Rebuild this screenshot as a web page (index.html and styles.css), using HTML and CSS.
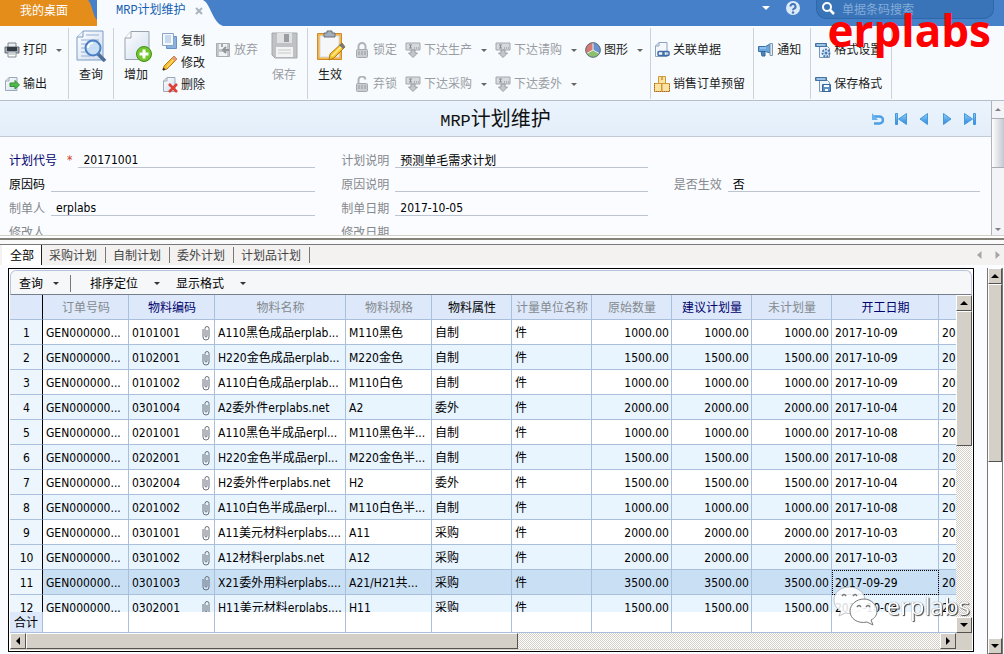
FILE: index.html
```html
<!DOCTYPE html>
<html lang="zh-CN">

<head>
  <meta charset="UTF-8" />
  <meta name="viewport" content="width=device-width, initial-scale=1.0" />
  <title>MRP计划维护</title>
  <link rel="stylesheet" href="styles.css">
</head>

<body>
  <!-- shared icons -->
  <svg class="defs" aria-hidden="true">
    <defs>
      <linearGradient id="paper" x1="0" y1="0" x2="1" y2="1">
        <stop offset="0" stop-color="#fff" />
        <stop offset="1" stop-color="#cfdcec" />
      </linearGradient>
      <linearGradient id="nav" x1="0" y1="0" x2="0" y2="1">
        <stop offset="0" stop-color="#8fd0f8" />
        <stop offset="1" stop-color="#2f86dd" />
      </linearGradient>
    </defs>
    <symbol id="clip" viewBox="0 0 8 16">
      <path d="M1 4v8a3 3 0 0 0 6 0V3.500a2 2 0 0 0-4 0V11a1 1 0 0 0 2 0V5" fill="none" stroke="#68717c" />
    </symbol>
    <symbol id="send" viewBox="0 0 16 16">
      <path d="M1 1h14v7H1z" fill="#d7dadd" stroke="#a3a8ad" />
      <path d="M4 3h3M5.500 3v3M4 6h3M9 6h1M11 6h1M13 6h1" stroke="#858b91" fill="none" />
      <path d="M6 8h4v3h2.500L8 15.500 3.500 11H6z" fill="#c3c7cb" stroke="#9aa0a6" />
    </symbol>
    <symbol id="lock" viewBox="0 0 16 16">
      <path d="M4.500 8V4.500a3.500 3.500 0 0 1 7 0V8" fill="none" stroke="#aeb3b8" stroke-width="2" />
      <rect x="2.500" y="7.500" width="11" height="8" rx="1" fill="#c9cdd1" stroke="#a5aaaf" />
      <path d="M4 10h8M4 12h8" stroke="#959ba1" stroke-dasharray="2 1" />
    </symbol>
    <symbol id="unlock" viewBox="0 0 16 16">
      <path d="M4.500 8V4.500a3.500 3.500 0 0 1 7-1" fill="none" stroke="#aeb3b8" stroke-width="2" />
      <rect x="2.500" y="7.500" width="11" height="8" rx="1" fill="#c9cdd1" stroke="#a5aaaf" />
      <path d="M4 10h8M4 12h8" stroke="#959ba1" stroke-dasharray="2 1" />
    </symbol>
    <symbol id="format" viewBox="0 0 16 16">
      <path d="M4.500 4.500h8l2 2v9h-10z" fill="#edf4fb" stroke="#7996b6" />
      <path d="M0.500 1.500h11v3h-11z" fill="#6b9fd2" stroke="#44719f" />
      <path d="M2 3h8" stroke="#d4e7f8" />
    </symbol>
  </svg>

  <div class="app">
    <header class="titlebar">
      <button class="tab tab-home">我的桌面</button>
      <svg class="home-edge" viewBox="0 0 9 26"><path d="M0 0C4 4 5 16 9 20V26H0z" fill="#e48d1b" /></svg>
      <div class="tab tab-active">
        <span>MRP计划维护</span>
        <button class="tab-close" aria-label="关闭"><svg viewBox="0 0 8 8"><path d="M1 1l6 6M7 1L1 7" stroke="#a9b4c0" stroke-width="2" /></svg></button>
      </div>
      <svg class="active-edge" viewBox="0 0 20 26"><path d="M0 0C8 4 9 22 20 26H0z" fill="#f7fbff" /></svg>
      <div class="titlebar-tools">
        <button class="plain" aria-label="菜单"><i class="caret caret-white"></i></button>
        <button class="plain" aria-label="帮助"><svg class="icon" viewBox="0 0 16 16"><circle cx="8" cy="8" r="7" fill="#dce9f8" /><path d="M5.500 6.500a2.500 2.500 0 1 1 3.600 2.200Q8 9.200 8 10.300" fill="none" stroke="#4076b5" stroke-width="2" /><circle cx="8" cy="12.500" r="1.200" fill="#4076b5" /></svg></button>
        <label class="search">
          <svg viewBox="0 0 14 14"><circle cx="6" cy="6" r="4" fill="none" stroke="#fff" stroke-width="2" /><path d="M9 9l4 4" stroke="#fff" stroke-width="2.500" /></svg>
          <input type="text" placeholder="单据条码搜索" aria-label="单据条码搜索">
        </label>
      </div>
    </header>

    <nav class="ribbon">
      <div class="group group-print">
        <div class="stack">
          <button class="tool">
            <svg class="icon" viewBox="0 0 16 16"><path d="M4 1h8v5H4z" fill="#e9edf2" stroke="#7c858f" /><path d="M1 5h14v6H1z" fill="#a7adb5" stroke="#656c75" /><path d="M3 5h10v4H3z" fill="#353b43" /><path d="M4 10h8v5H4z" fill="#fff" stroke="#858d96" /><path d="M5 12h6" stroke="#9aa" /></svg>
            打印<i class="caret"></i></button>
          <button class="tool">
            <svg class="icon" viewBox="0 0 16 16"><path d="M5 1.500h8v13H1.500V5z" fill="url(#paper)" stroke="#9ba9b9" /><path d="M5 1.500V5H1.500" fill="none" stroke="#9ba9b9" /><path d="M6 7h5V4.500L15.500 9 11 13v-2.500H6z" fill="#4fb848" stroke="#34923a" /></svg>
            输出</button>
        </div>
      </div>

      <div class="group group-query">
        <button class="big-tool">
          <svg viewBox="0 0 32 32"><path d="M8 1h20v29H2V7z" fill="url(#paper)" stroke="#7b9dc5" /><path d="M8 1v6H2" fill="#eaf2fb" stroke="#7b9dc5" /><path d="M11 5h13M6 10h18M6 14h18M6 18h18M6 22h10M6 26h10" stroke="#8fb0da" /><path d="M23 24l7 7" stroke="#4f6e98" stroke-width="3.500" /><circle cx="18" cy="18" r="7.500" fill="#c5e0f7" fill-opacity=".9" stroke="#4d7fc5" stroke-width="2" /><path d="M13 18a5 5 0 0 1 5-5" stroke="#fff" stroke-width="2" fill="none" /></svg>
          查询</button>
      </div>

      <div class="group group-edit">
        <button class="big-tool">
          <svg viewBox="0 0 32 32"><path d="M11 1.500h18v28H5V8z" fill="url(#paper)" stroke="#98a3ae" /><path d="M11 1.500V8H5" fill="#fff" stroke="#98a3ae" /><circle cx="24" cy="24" r="7.500" fill="#72c62b" stroke="#438e1b" /><path d="M24 19.500v9M19.500 24h9" stroke="#fff" stroke-width="3" /></svg>
          增加</button>
        <div class="stack stack-three">
          <button class="tool">
            <svg class="icon" viewBox="0 0 16 16"><path d="M4.500 3.500h10v12h-10z" fill="#8ab2df" stroke="#6691c2" /><path d="M.5.5h11v12H.5z" fill="#f3f8fd" stroke="#89a4c3" /><path d="M3 3h6M3 5h6M3 7h6M3 9h6" stroke="#9bb9dc" /></svg>
            复制</button>
          <button class="tool">
            <svg class="icon" viewBox="0 0 16 16"><path d="M12 1l3 3L5 14l-4 1 1-4z" fill="#f7bd2c" stroke="#b57a1b" /><path d="M12 1l3 3-2 2-3-3z" fill="#e7948a" /><path d="M5 12l6-7" stroke="#ffe795" /><path d="M1 15l2-.5L1.500 13z" fill="#333" stroke="#333" /></svg>
            修改</button>
          <button class="tool">
            <svg class="icon" viewBox="0 0 16 16"><path d="M5 .5h8v14H1.500V4z" fill="url(#paper)" stroke="#9ba9b9" /><path d="M5 .5V4H1.500" fill="none" stroke="#9ba9b9" /><path d="M7 7l8 8M15 7l-8 8" stroke="#df3f35" stroke-width="2.500" /></svg>
            删除</button>
        </div>
        <div class="stack">
          <button class="tool" disabled>
            <svg class="icon" viewBox="0 0 16 16"><path d="M1.500 1.500h13v13h-13z" fill="#c4c7ca" stroke="#a9adb1" /><path d="M4 2h8v5H4zM4 10h8v4H4z" fill="#f0f1f2" /><path d="M6 2h2v3H6z" fill="#a5a9ad" /><path d="M14 8H8m3-3L8 8l3 3" stroke="#909599" stroke-width="2" fill="none" /></svg>
            放弃</button>
        </div>
        <button class="big-tool" disabled>
          <svg viewBox="0 0 32 32"><path d="M4 3h25v25H7l-3-3z" fill="#bfc1c4" stroke="#a5a8ab" /><path d="M9 3h15v10H9z" fill="#dfe1e3" /><path d="M16 4h5v8h-5z" fill="#999da1" /><path d="M8 17h17v10H8z" fill="#f3f3f4" /><path d="M10 20h13M10 23h13" stroke="#c6c8ca" /></svg>
          保存</button>
      </div>

      <div class="group group-flow">
        <button class="big-tool">
          <svg viewBox="0 0 32 32"><path d="M3.500 3.500h24v26h-24z" fill="#f3b64e" stroke="#d08a26" /><path d="M6 6h19v21H6z" fill="#f6f7f8" stroke="#d5d9dc" /><path d="M10 3h3V1h5v2h3v4H10z" fill="#a5afb9" stroke="#66727d" /><path d="M28 13l3 4-11 11-5 2 1-6z" fill="#f7c632" stroke="#af791b" /><path d="M28 13l3 4-2 2-4-4z" fill="#777" /><path d="M18 26l9-9" stroke="#fff099" stroke-width="1.500" /></svg>
          生效</button>
        <div class="stack">
          <button class="tool" disabled><svg class="icon"><use href="#lock" /></svg>锁定</button>
          <button class="tool" disabled><svg class="icon"><use href="#unlock" /></svg>弃锁</button>
        </div>
        <div class="stack">
          <button class="tool" disabled><svg class="icon"><use href="#send" /></svg>下达生产<i class="caret"></i></button>
          <button class="tool" disabled><svg class="icon"><use href="#send" /></svg>下达采购<i class="caret"></i></button>
        </div>
        <div class="stack">
          <button class="tool" disabled><svg class="icon"><use href="#send" /></svg>下达请购<i class="caret"></i></button>
          <button class="tool" disabled><svg class="icon"><use href="#send" /></svg>下达委外<i class="caret"></i></button>
        </div>
        <div class="stack">
          <button class="tool">
            <svg class="icon" viewBox="0 0 16 16"><circle cx="8" cy="8" r="7.500" fill="#8cc06d" /><path d="M8 8V.5A7.500 7.500 0 0 0 1.500 11.700z" fill="#d67972" /><path d="M8 8V.5a7.500 7.500 0 0 1 6.500 11.200z" fill="#6991cd" /><path d="M8 .5V8l6.500 3.700M8 8l-6.500 3.700" stroke="#e9f0f5" fill="none" /><circle cx="8" cy="8" r="7.300" fill="none" stroke="#5d7187" /></svg>
            图形<i class="caret"></i></button>
        </div>
      </div>

      <div class="group group-link">
        <div class="stack">
          <button class="tool">
            <svg class="icon" viewBox="0 0 16 16"><path d="M5 .5h8v14H1.500V4z" fill="#f4f8fc" stroke="#8da4bf" /><path d="M5 .5V4H1.500" fill="none" stroke="#8da4bf" /><rect x="4" y="9.500" width="6" height="4" rx="1" fill="none" stroke="#3e6ca8" stroke-width="1.500" /><rect x="9" y="9.500" width="6" height="4" rx="1" fill="none" stroke="#3e6ca8" stroke-width="1.500" /></svg>
            关联单据</button>
          <button class="tool">
            <svg class="icon" viewBox="0 0 16 16"><path d="M4.500.500h7v7h-7zM.5 7.500h7v8h-7zM8 7.500h7.500v8H8z" fill="#fbe3a1" stroke="#cf993e" /><path d="M7 1h2v3H7z" fill="#d9a54c" /><path d="M.5 7v8.500h15V7" fill="none" stroke="#aa6526" stroke-dasharray="1 1" /></svg>
            销售订单预留</button>
        </div>
      </div>

      <div class="group group-notice">
        <div class="stack">
          <button class="tool">
            <svg class="icon" viewBox="0 0 16 16"><path d="M.5 4.500h7L12 2v9L7.500 9.500h-7z" fill="#6ba6dd" stroke="#3972aa" /><path d="M3 9.500h4V14H4z" fill="#4e86bd" stroke="#356795" /><path d="M12 1.500h2.500v12H12z" fill="#dce9f4" stroke="#8499ae" /><path d="M2 6h6" stroke="#b8dcf9" /></svg>
            通知</button>
        </div>
      </div>

      <div class="group group-format">
        <div class="stack">
          <button class="tool">
            <svg class="icon" viewBox="0 0 16 16"><use href="#format" /><circle cx="11" cy="11" r="3.500" fill="#e0edf8" stroke="#4a7bb4" stroke-width="2" stroke-dasharray="2 1" /><circle cx="11" cy="11" r="1.500" fill="#4a7bb4" /></svg>
            格式设置</button>
          <button class="tool">
            <svg class="icon" viewBox="0 0 16 16"><use href="#format" /><path d="M7.500 8.500h8v7h-8z" fill="#5c8fc8" stroke="#35669e" /><path d="M9 9h5v2H9zM10 13h3v2h-3z" fill="#fff" /></svg>
            保存格式</button>
        </div>
      </div>
    </nav>

    <section class="bill">
      <div class="bill-main">
        <div class="bill-head">
          <h1><span class="latin">MRP</span>计划维护</h1>
          <div class="pager">
            <button class="plain" aria-label="刷新"><svg viewBox="0 0 12 12"><path d="M1 3.500h6.500a3.500 3.500 0 0 1 0 7H2" fill="none" stroke="#4a9fe6" stroke-width="2.500" /><path d="M0 0v7h6z" fill="#68b3ee" /></svg></button>
            <button class="plain" aria-label="首张"><svg viewBox="0 0 12 12"><path d="M.5.5h2v11h-2zM11.500.500v11L3.500 6z" fill="url(#nav)" stroke="#4598dc" /></svg></button>
            <button class="plain" aria-label="上张"><svg viewBox="0 0 12 12"><path d="M9.500.500v11L2 6z" fill="url(#nav)" stroke="#4598dc" /></svg></button>
            <button class="plain" aria-label="下张"><svg viewBox="0 0 12 12"><path d="M2.500.500v11L10 6z" fill="url(#nav)" stroke="#4598dc" /></svg></button>
            <button class="plain" aria-label="末张"><svg viewBox="0 0 12 12"><path d="M9.500.500h2v11h-2zM.5.5v11L8.500 6z" fill="url(#nav)" stroke="#4598dc" /></svg></button>
          </div>
        </div>
        <form class="fields">
          <div class="field key"><label for="code">计划代号</label><b class="star">*</b><input id="code" value="20171001"></div>
          <div class="field"><label for="memo">计划说明</label><input id="memo" value="预测单毛需求计划"></div>
          <div></div>
          <div class="field dark"><label for="reason">原因码</label><input id="reason"></div>
          <div class="field"><label for="reason-memo">原因说明</label><input id="reason-memo"></div>
          <div class="field"><label for="valid">是否生效</label><input id="valid" value="否"></div>
          <div class="field"><label for="maker">制单人</label><input id="maker" value="erplabs"></div>
          <div class="field"><label for="made">制单日期</label><input id="made" value="2017-10-05"></div>
          <div></div>
          <div class="field"><label for="editor">修改人</label><input id="editor"></div>
          <div class="field"><label for="edited">修改日期</label><input id="edited"></div>
        </form>
      </div>
      <div class="slim-scroll">
        <button aria-label="向上"><i class="caret caret-up"></i></button>
        <div class="slim-thumb"></div>
        <button class="slim-down" aria-label="向下"><i class="caret"></i></button>
      </div>
    </section>

    <div class="splitter"></div>

    <div class="sheets">
      <button class="sheet current">全部</button>
      <button class="sheet">采购计划</button>
      <button class="sheet">自制计划</button>
      <button class="sheet">委外计划</button>
      <button class="sheet">计划品计划</button>
      <div class="sheet-arrows">
        <button class="plain" aria-label="左移"><svg viewBox="0 0 5 8"><path d="M4.500 0v8L0 4z" fill="#a5a5a5" /></svg></button>
        <button class="plain" aria-label="右移"><svg viewBox="0 0 5 8"><path d="M.5 0v8L5 4z" fill="#a5a5a5" /></svg></button>
      </div>
    </div>

    <main class="detail">
      <div class="grid-box">
        <div class="grid-bar">
          <button class="bar-button">查询<i class="caret"></i></button>
          <button class="bar-button wide">排序定位<i class="caret"></i></button>
          <button class="bar-button wide">显示格式<i class="caret"></i></button>
        </div>
        <div class="grid-body">
          <div class="grid-view">
            <table>
              <colgroup>
                <col class="w-no"><col class="w-code"><col class="w-code"><col class="w-name"><col class="w-code">
                <col class="w-num"><col class="w-num"><col class="w-num"><col class="w-num"><col class="w-num">
                <col class="w-date"><col class="w-date">
              </colgroup>
              <thead>
                <tr>
                  <th></th>
                  <th>订单号码</th>
                  <th class="key">物料编码</th>
                  <th>物料名称</th>
                  <th>物料规格</th>
                  <th class="dark">物料属性</th>
                  <th>计量单位名称</th>
                  <th>原始数量</th>
                  <th class="key">建议计划量</th>
                  <th>未计划量</th>
                  <th class="key">开工日期</th>
                  <th></th>
                </tr>
              </thead>
              <tbody class="rows-js"></tbody>
              <tfoot>
                <tr>
                  <th>合计</th>
                  <td></td><td></td><td></td><td></td><td></td><td></td><td></td><td></td><td></td><td></td><td></td>
                </tr>
              </tfoot>
            </table>
          </div>
          <div class="scroll scroll-v">
            <button aria-label="向上"><i class="caret caret-up"></i></button>
            <div class="thumb"></div>
            <button class="last" aria-label="向下"><i class="caret"></i></button>
          </div>
        </div>
        <div class="grid-foot">
          <div class="scroll scroll-h">
            <button aria-label="向左"><i class="caret caret-left"></i></button>
            <div class="thumb"></div>
            <button class="last" aria-label="向右"><i class="caret caret-right"></i></button>
          </div>
        </div>
      </div>
      <div class="scroll scroll-v scroll-page">
        <button aria-label="向上"><i class="caret caret-up"></i></button>
        <div class="thumb"></div>
        <button class="last" aria-label="向下"><i class="caret"></i></button>
      </div>
    </main>

    <div class="brand">erplabs</div>
    <div class="watermark">
      <svg viewBox="0 0 46 40">
        <path d="M16 1C7 1 1 7 1 14c0 5 3 9 7 11l-2 5 6-3c9 2 20-3 20-13C32 7 25 1 16 1z" fill="#fff" fill-opacity=".85" stroke="#aaa" stroke-width=".7" />
        <path d="M31 13c-8 0-14 6-14 12 0 8 8 13 17 11l6 3-2-5c4-2 6-5 6-9 0-6-6-12-13-12z" fill="#fff" fill-opacity=".9" stroke="#777" />
        <path d="M9 10q2-3 4 0M20 10q2-3 4 0M24 21q2-3 4 0M33 21q2-3 4 0" fill="none" stroke="#777" stroke-width="1.500" />
      </svg>
      <span>erplabs</span>
    </div>
  </div>

  <script>
    // code, name, spec, type, quantity, start date
    const rows = [
      ['0101001', 'A110黑色成品erplab...', 'M110黑色', '自制', '1000.00', '2017-10-09'],
      ['0102001', 'H220金色成品erplab...', 'M220金色', '自制', '1500.00', '2017-10-09'],
      ['0101002', 'A110白色成品erplab...', 'M110白色', '自制', '1000.00', '2017-10-09'],
      ['0301004', 'A2委外件erplabs.net', 'A2', '委外', '2000.00', '2017-10-04'],
      ['0201001', 'A110黑色半成品erpl...', 'M110黑色半...', '自制', '1000.00', '2017-10-08'],
      ['0202001', 'H220金色半成品erpl...', 'M220金色半...', '自制', '1500.00', '2017-10-08'],
      ['0302004', 'H2委外件erplabs.net', 'H2', '委外', '1500.00', '2017-10-04'],
      ['0201002', 'A110白色半成品erpl...', 'M110白色半...', '自制', '1000.00', '2017-10-08'],
      ['0301001', 'A11美元材料erplabs....', 'A11', '采购', '2000.00', '2017-10-03'],
      ['0301002', 'A12材料erplabs.net', 'A12', '采购', '2000.00', '2017-10-03'],
      ['0301003', 'X21委外用料erplabs....', 'A21/H21共...', '采购', '3500.00', '2017-09-29'],
      ['0302001', 'H11美元材料erplabs....', 'H11', '采购', '1500.00', '2017-10-03'],
    ];
    const selected = 10;

    document.querySelector('.rows-js').innerHTML = rows.map(([code, name, spec, type, qty, date], i) => `
      <tr class="${i === selected ? 'selected' : ''}">
        <th>${i + 1}</th>
        <td>GEN000000...</td>
        <td><div class="code">${code}<svg><use href="#clip" /></svg></div></td>
        <td>${name}</td>
        <td>${spec}</td>
        <td>${type}</td>
        <td>件</td>
        <td class="num">${qty}</td>
        <td class="num">${qty}</td>
        <td class="num">${qty}</td>
        <td class="date">${date}</td>
        <td>${date}</td>
      </tr>`).join('');
  </script>
</body>

</html>
```
FILE: styles.css
```css
* {
  box-sizing: border-box;
}

body {
  margin: 0;
  background-color: #fafcff;
}

body,
button,
input {
  font-family: "DejaVu Sans Condensed", "Noto Sans", "Noto Sans CJK SC", sans-serif;
  font-size: 12px;
  line-height: 16px;
}

button {
  margin: 0;
  padding: 0;
  border: none;
  background: none;
  color: inherit;
  white-space: nowrap;
}

svg {
  display: block;
  flex: none;
}

.defs {
  position: absolute;
  width: 0;
  height: 0;
}

.app {
  position: relative;
  height: 100vh;
  display: flex;
  flex-direction: column;
  overflow: hidden;
}

.icon {
  width: 16px;
  height: 16px;
}

.caret {
  flex: none;
  border: 3px solid transparent;
  border-top-color: #333;
  border-bottom: none;
}

.caret-up {
  border: 3px solid transparent;
  border-bottom-color: #333;
  border-top: none;
}

.caret-left {
  border: 4px solid transparent;
  border-right-color: #000;
  border-left: none;
}

.caret-right {
  border: 4px solid transparent;
  border-left-color: #000;
  border-right: none;
}

.caret-white {
  border-width: 4px;
  border-bottom: none;
  border-top-color: #fff;
}

/* Title bar */
.titlebar {
  flex: none;
  display: flex;
  height: 26px;
  background-color: #4580c8;
}

.tab {
  display: flex;
  align-items: center;
  padding-bottom: 5px;
}

.tab-home {
  width: 88px;
  justify-content: center;
  background-color: #e48d1b;
  color: #fff;
}

.home-edge {
  width: 9px;
  height: 26px;
}

.tab-active {
  gap: 9px;
  padding-left: 19px;
  background-color: #f7fbff;
  color: #1560b0;
  font-family: "Liberation Mono", "Noto Sans CJK SC", monospace;
}

.tab-close svg {
  width: 8px;
  height: 8px;
}

.active-edge {
  width: 20px;
  height: 26px;
}

.titlebar-tools {
  display: flex;
  align-items: flex-start;
  gap: 15px;
  margin-left: auto;
  padding-right: 10px;
}

.titlebar-tools .plain {
  display: flex;
  align-items: center;
  height: 16px;
}

.search {
  display: flex;
  gap: 7px;
  width: 178px;
  height: 19px;
  padding: 1px 8px 0 4px;
  border: 1px solid #2e68ab;
  border-top: none;
  border-radius: 0 0 10px 10px;
  background-color: #3a74b8;
}

.search svg {
  width: 14px;
  height: 14px;
}

.search input {
  flex: 1;
  min-width: 0;
  padding: 0;
  border: none;
  outline: none;
  background: none;
  color: #fff;
}

.search input::placeholder {
  color: #83acd9;
}

/* Ribbon */
.ribbon {
  flex: none;
  display: flex;
  height: 75px;
  border-bottom: 1px solid #b4bfcb;
  background-color: #f8fbfe;
  color: #1b1b1b;
}

.group {
  display: flex;
  align-items: flex-start;
  gap: 8px;
  margin: 2px 0 1px;
  border-right: 1px solid #ccd2d9;
}

.group-print {
  padding: 0 6px 0 4px;
}

.group-query {
  padding: 0 6px;
}

.group-edit {
  gap: 10px;
  padding: 0 7px 0 6px;
}

.group-flow {
  padding: 0 7px 0 6px;
}

.group-link {
  padding: 0 8px 0 3px;
}

.group-notice {
  padding: 0 9px 0 4px;
}

.group-format {
  padding: 0 9px 0 4px;
}

.stack {
  display: flex;
  flex-direction: column;
  gap: 18px;
  padding-top: 14px;
}

.stack-three {
  gap: 6px;
  padding-top: 5px;
}

.tool {
  display: flex;
  align-items: center;
  gap: 3px;
  height: 16px;
}

.tool .caret {
  margin-left: 6px;
  border-top-color: #666;
}

.tool:disabled,
.big-tool:disabled {
  color: #999da2;
}

.big-tool {
  width: 32px;
  padding-top: 2px;
}

.big-tool svg {
  width: 32px;
  height: 32px;
  margin-bottom: 5px;
}

/* Bill head */
.bill {
  flex: none;
  display: flex;
  height: 134px;
}

.bill-main {
  flex: 1;
  min-width: 0;
  overflow: hidden;
}

.bill-head {
  display: flex;
  align-items: center;
  justify-content: center;
  position: relative;
  height: 36px;
  border-bottom: 1px solid #c2cbd5;
  background: linear-gradient(#ebf4fd, #e3eefa);
}

h1 {
  margin: 0;
  padding-top: 3px;
  color: #111;
  font-size: 20px;
  line-height: 28px;
  font-weight: normal;
}

.latin {
  font-family: "Liberation Mono", monospace;
  font-size: 17px;
}

.pager {
  position: absolute;
  right: 15px;
  display: flex;
  gap: 11px;
}

.pager svg {
  width: 12px;
  height: 12px;
}

.fields {
  display: grid;
  grid-template-columns: repeat(3, 1fr);
  grid-auto-rows: 24px;
  column-gap: 26px;
  padding: 7px 11px 0 9px;
}

.field {
  display: flex;
  align-items: flex-end;
  gap: 6px;
  color: #85888c;
}

.field input {
  flex: 1;
  min-width: 0;
  height: 18px;
  padding: 2px 5px 0;
  border: none;
  border-bottom: 1px solid #bcc5cf;
  outline: none;
  background: none;
  color: #000;
}

.field label {
  line-height: 14px;
  white-space: nowrap;
}

.key {
  color: #00006c;
}

.dark {
  color: #000;
}

.star {
  padding-left: 4px;
  color: #d33a1e;
  font-weight: normal;
}

.slim-scroll {
  display: flex;
  flex-direction: column;
  width: 13px;
  border-left: 1px solid #aeb3b8;
  background-color: #f2f4f7;
}

.slim-scroll button {
  display: flex;
  align-items: center;
  justify-content: center;
  height: 17px;
}

.slim-scroll .caret {
  opacity: .6;
}

.slim-thumb {
  height: 50px;
  border: 1px solid #a9adb3;
  border-width: 1px 0;
  background: linear-gradient(to right, #fff, #c4c7cf);
}

.slim-scroll .slim-down {
  height: 12px;
  margin-top: auto;
}

.splitter {
  flex: none;
  height: 10px;
  border-top: 1px solid #d3d0c8;
  border-bottom: 1px solid #77797c;
  background: linear-gradient(#fff 2px, #85827a 2px, #85827a 4px, #fafafa 4px);
}

/* Sheet tabs */
.sheets {
  flex: none;
  display: flex;
  align-items: center;
  height: 20px;
  margin-bottom: 3px;
  padding-left: 2px;
  background-color: #f3f2f1;
  color: #444;
}

.sheet {
  padding: 2px 8px 0 7px;
  border-right: 1px solid #777;
  line-height: 14px;
}

.current {
  height: 20px;
  padding-left: 8px;
  padding-right: 7px;
  border-color: #222;
  background-color: #fff;
  color: #000;
}

.sheet-arrows {
  display: flex;
  gap: 13px;
  margin-left: auto;
  padding-right: 4px;
}

.sheet-arrows svg {
  width: 5px;
  height: 8px;
}

/* Detail grid */
.detail {
  flex: 1;
  display: flex;
  min-height: 0;
  padding-left: 8px;
}

.grid-box {
  flex: 1;
  display: flex;
  flex-direction: column;
  min-width: 0;
  margin: 0 13px 2px 0;
  padding: 1px;
  border: 1px solid #000;
  background-color: #fff;
}

.grid-bar {
  flex: none;
  display: flex;
  align-items: center;
  height: 25px;
  padding-top: 2px;
  border: 1px solid #b5c5dc;
  border-bottom-color: #777f8c;
  border-radius: 6px 6px 0 0;
  background-color: #f6f7f9;
}

.bar-button {
  display: flex;
  align-items: center;
  gap: 10px;
  height: 17px;
  padding: 0 11px 0 8px;
  border-right: 1px solid #777;
}

.wide {
  gap: 16px;
  padding: 0 0 0 19px;
  border: none;
}

.wide + .wide {
  padding-left: 16px;
}

.grid-body {
  flex: 1;
  display: flex;
  min-height: 0;
}

.grid-view {
  flex: 1;
  min-width: 0;
  overflow: hidden;
}

table {
  width: 100%;
  min-width: 1036px;
  table-layout: fixed;
  border-collapse: separate;
  border-spacing: 0;
}

.w-no {
  width: 33px;
}

.w-code {
  width: 86px;
}

.w-name {
  width: 131px;
}

.w-num {
  width: 80px;
}

.w-date {
  width: 107px;
}

th,
td {
  height: 25px;
  padding: 2px 2px 0 3px;
  border-right: 1px solid #a9bfdb;
  border-bottom: 1px solid #a9bfdb;
  overflow: hidden;
  text-align: left;
  white-space: nowrap;
}

th {
  font-weight: normal;
  text-align: center;
}

th:first-child {
  border-right-color: #000;
  background-color: #edf5fd;
}

thead th,
thead th:first-child {
  position: sticky;
  top: 0;
  background-color: #dde9fa;
}

thead th:not(.key):not(.dark) {
  color: #85898f;
}

tbody tr:nth-child(even) td {
  background-color: #e8f4fe;
}

tbody tr.selected td {
  background-color: #c9dff4;
}

.selected .date {
  outline: 1px dotted #000;
  outline-offset: -1px;
}

.num {
  text-align: right;
}

.code {
  display: flex;
  align-items: center;
  justify-content: space-between;
  padding-right: 2px;
}

.code svg {
  width: 8px;
  height: 16px;
}

tfoot th,
tfoot td {
  position: sticky;
  bottom: 0;
  height: 21px;
  padding: 2px 0 0;
  background-color: #fff;
}

tfoot th:first-child {
  border-right-color: #a9bfdb;
  background-color: #dde9fa;
}

/* Classic scroll bars */
.scroll {
  display: flex;
  background: repeating-conic-gradient(#d4d0c8 0 25%, #fff 0 50%) 0 0 / 2px 2px;
}

.scroll button,
.thumb {
  flex: none;
  border: 1px solid #fff;
  border-right-color: #55534f;
  border-bottom-color: #55534f;
  background-color: #d4d0c8;
}

.scroll button {
  display: flex;
  align-items: center;
  justify-content: center;
  width: 16px;
  height: 16px;
}

.scroll .last {
  margin-top: auto;
}

.scroll-v {
  flex: none;
  flex-direction: column;
  width: 16px;
}

.scroll-v .thumb {
  height: 40%;
}

.scroll-v .caret {
  border-width: 4px;
  border-bottom: none;
  border-top-color: #000;
}

.scroll-v .caret-up {
  border: 4px solid transparent;
  border-bottom-color: #000;
  border-top: none;
}

.scroll-h {
  flex: 1;
  height: 16px;
}

.scroll-h .thumb {
  width: 52%;
}

.scroll-h .last {
  margin: 0 0 0 auto;
}

.grid-foot {
  flex: none;
  padding: 0 16px 1px 0;
  background-color: #d4d0c8;
}

.scroll-page {
  margin-right: 1px;
  border: 1px solid #777;
  border-width: 0 1px;
  background: #fff;
}

.scroll-page .thumb {
  height: 46%;
}

.scroll-page button {
  width: 14px;
}

/* Marks laid over the window */
.brand {
  position: absolute;
  top: 0;
  right: 13px;
  color: #f00;
  font: bold 44px/60px "Open Sans", sans-serif;
}

.watermark {
  position: absolute;
  right: 34px;
  bottom: 28px;
  display: flex;
  align-items: center;
  gap: 8px;
  color: #fff;
  font: 24px/36px "Open Sans", sans-serif;
  text-shadow: 1px 1px 1px #444, 0 0 1px #666;
}

.watermark svg {
  width: 46px;
  height: 40px;
}
```
